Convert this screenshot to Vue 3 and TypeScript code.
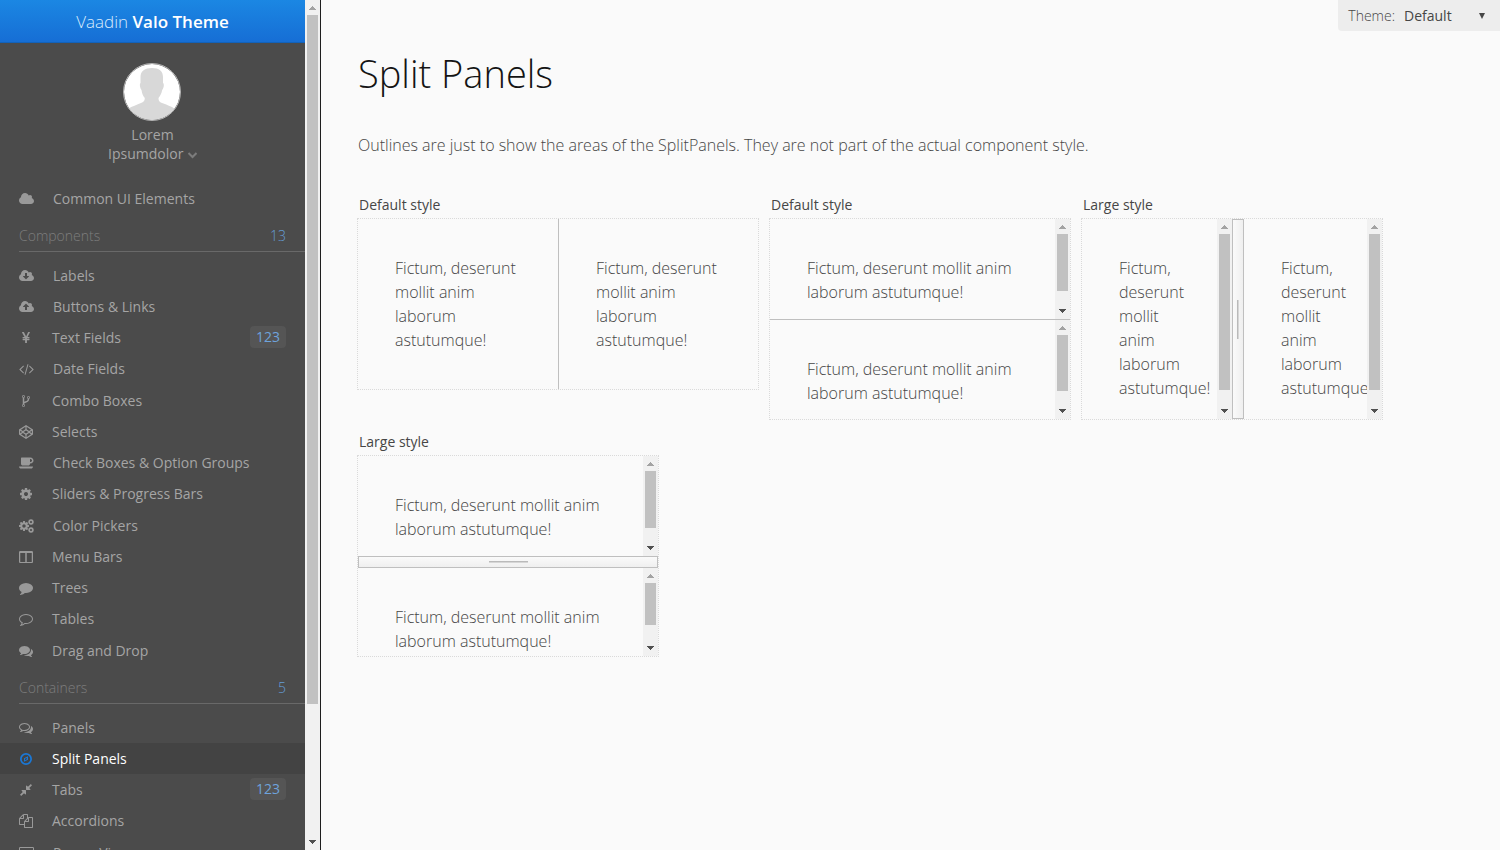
<script setup lang="ts">
import { defineComponent, h, ref } from 'vue'

interface MenuItem {
  label: string
  icon: string
  badge?: string
}

interface MenuSection {
  title: string
  count: number
  items: MenuItem[]
}

interface Glyph {
  width: number
  d: string
}

interface Pane {
  thumb?: number
}

interface Split {
  id: string
  caption: string
  direction: 'horizontal' | 'vertical'
  large: boolean
  panes: [Pane, Pane]
  size: 'wide' | 'regular'
}

const cloud =
  'M1920 1152q0 159-112.5 271.5t-271.5 112.5h-1088q-185 0-316.5-131.5t-131.5-316.5q0-132 71-241.5t187-163.5q-2-28-2-43 0-212 150-362t362-150q158 0 286.5 88t187.5 230q70-62 166-62 106 0 181 75t75 181q0 75-41 138 129 30 213 134.5t84 239.5z'

const glyphs: Record<string, Glyph> = {
  cloud: { width: 15, d: cloud },
  download: {
    width: 15,
    d: cloud + 'M1280 928q0-14-9-23t-23-9h-224v-352q0-13-9.5-22.5t-22.5-9.5h-192q-13 0-22.5 9.5t-9.5 22.5v352h-224q-13 0-22.5 9.5t-9.5 22.5q0 14 9 23l352 352q9 9 23 9t23-9l351-351q10-12 10-24z',
  },
  upload: {
    width: 15,
    d: cloud + 'M1280 864q0-14-9-23l-352-352q-9-9-23-9t-23 9l-351 351q-10 12-10 24 0 14 9 23t23 9h224v352q0 13 9.5 22.5t22.5 9.5h192q13 0 22.5-9.5t9.5-22.5v-352h224q13 0 22.5-9.5t9.5-22.5z',
  },
  yen: {
    width: 14,
    d: 'M985.500 1536h-172q-13 0-22.500-9t-9.500-23v-330h-288q-13 0-22.500-9t-9.500-23v-103q0-13 9.500-22.500t22.500-9.500h288v-85h-288q-13 0-22.500-9t-9.500-23v-104q0-13 9.500-22.500t22.500-9.500h214l-321-578q-8-16 0-32 10-16 28-16h194q19 0 29 18l215 425q19 38 56 125 10-24 30.500-68t27.500-61l191-420q8-19 29-19h191q17 0 27 16 9 14 1 31l-313 579h215q13 0 22.500 9.500t9.500 22.500v104q0 14-9.500 23t-22.500 9h-290v85h290q13 0 22.500 9.500t9.500 22.500v103q0 14-9.500 23t-22.500 9h-290v330q0 13-9.500 22.500t-22.500 9.500z',
  },
  code: {
    width: 15,
    d: 'M617 1399l-50 50q-10 10-23 10t-23-10l-466-466q-10-10-10-23t10-23l466-466q10-10 23-10t23 10l50 50q10 10 10 23t-10 23l-393 393 393 393q10 10 10 23t-10 23zm591-1067l-373 1291q-4 13-15.5 19.5t-23.5 2.5l-62-17q-13-4-19.5-15.5t-2.500-24.500l373-1291q4-13 15.500-19.500t23.500-2.500l62 17q13 4 19.500 15.500t2.500 24.500zm657 651l-466 466q-10 10-23 10t-23-10l-50-50q-10-10-10-23t10-23l393-393-393-393q-10-10-10-23t10-23l50-50q10-10 23-10t23 10l466 466q10 10 10 23t-10 23z',
  },
  fork: {
    width: 14,
    d: 'M672 1472q0-40-28-68t-68-28-68 28-28 68 28 68 68 28 68-28 28-68zm0-1152q0-40-28-68t-68-28-68 28-28 68 28 68 68 28 68-28 28-68zm640 128q0-40-28-68t-68-28-68 28-28 68 28 68 68 28 68-28 28-68zm96 0q0 52-26 96.500t-70 69.500q-2 287-226 414-67 38-203 81-128 40-169.500 71t-41.500 100v26q44 25 70 69.500t26 96.500q0 80-56 136t-136 56-136-56-56-136q0-52 26-96.500t70-69.500v-820q-44-25-70-69.500t-26-96.500q0-80 56-136t136-56 136 56 56 136q0 52-26 96.500t-70 69.500v497q54-26 154-57 55-17 87.500-29.500t70.500-31 59-39.500 40.500-51 28-69.500 8.500-91.500q-44-25-70-69.500t-26-96.500q0-80 56-136t136-56 136 56 56 136z',
  },
  codepen: {
    width: 14,
    d: 'M896 0L1792 570V1222L896 1792L0 1222V570ZM820 230L250 600L500 770L820 555ZM972 230V555L1292 770L1542 600ZM896 690L590 896L896 1102L1202 896ZM154 740V1052L390 896ZM1638 740L1402 896L1638 1052ZM500 1022L250 1192L820 1562V1237ZM1292 1022L972 1237V1562L1542 1192Z',
  },
  coffee: {
    width: 15,
    d: 'M1664 576q0-80-56-136t-136-56h-64v384h64q80 0 136-56t56-136zm-1664 768h1792q0 106-75 181t-181 75h-1280q-106 0-181-75t-75-181zm1856-768q0 159-112.500 271.500t-271.500 112.500h-64v32q0 92-66 158t-158 66h-704q-92 0-158-66t-66-158v-736q0-26 19-45t45-19h1152q159 0 271.500 112.500t112.500 271.500z',
  },
  cog: {
    width: 14,
    d: 'M1152 896q0-106-75-181t-181-75-181 75-75 181 75 181 181 75 181-75 75-181zm512-109v222q0 12-8 23t-20 13l-185 28q-19 54-39 91 35 50 107 138 10 12 10 25t-9 23q-27 37-99 108t-94 71q-12 0-26-9l-138-108q-44 23-91 38-16 136-29 186-7 28-36 28h-222q-14 0-24.500-8.500t-11.500-21.500l-28-184q-49-16-90-37l-141 107q-10 9-25 9-14 0-25-11-126-114-165-168-7-10-7-23 0-12 8-23 15-21 51-66.500t54-70.500q-27-50-41-99l-183-27q-13-2-21-12.500t-8-23.500v-222q0-12 8-23t19-13l186-28q14-46 39-92-40-57-107-138-10-12-10-24 0-10 9-23 26-36 98.500-107.500t94.500-71.500q13 0 26 10l138 107q44-23 91-38 16-136 29-186 7-28 36-28h222q14 0 24.500 8.500t11.500 21.500l28 184q49 16 90 37l142-107q9-9 24-9 13 0 25 10 129 119 165 170 7 8 7 22 0 12-8 23-15 21-51 66.500t-54 70.500q26 50 41 98l183 28q13 2 21 12.500t8 23.500z',
  },
  cogs: { width: 15, d: '' },
  columns: {
    width: 14,
    d: 'M192 1536h608v-1152h-640v1120q0 13 9.500 22.500t22.500 9.500zM1632 1504v-1120h-640v1152h608q13 0 22.500-9.500t9.500-22.500zM1792 288v1216q0 66-47 113t-113 47h-1472q-66 0-113-47t-47-113v-1216q0-66 47-113t113-47h1472q66 0 113 47t47 113z',
  },
  comment: {
    width: 14,
    d: 'M1792 896q0 174-120 321.500t-326 233-450 85.500q-70 0-145-8-198 175-460 242-49 14-114 22-17 2-30.500-9t-17.500-29v-1q-3-4-.5-12t2-10 4.500-9.500l6-9 7-8.500 8-9q7-8 31-34.500t34.500-38 31-39.500 32.500-51 27-59 26-76q-157-89-247.500-220t-90.500-281q0-130 71-248.500t191-204.500 286-136.500 348-50.500 348 50.500 286 136.500 191 204.500 71 248.500z',
  },
  commentOutline: {
    width: 14,
    d: 'M896 384q-204 0-381.500 69.500t-282 187.500-104.500 255q0 112 71.500 213.500t201.500 175.500l87 50-27 96q-24 91-70 172 152-63 275-171l43-38 57 6q69 8 130 8 204 0 381.500-69.500t282-187.500 104.500-255-104.500-255-282-187.500-381.500-69.500zm896 512q0 174-120 321.500t-326 233-450 85.500q-70 0-145-8-198 175-460 242-49 14-114 22h-5q-15 0-27-10.500t-16-27.500v-1q-3-4-.5-12t2-10 4.500-9.500l6-9 7-8.500 8-9q7-8 31-34.500t34.500-38 31-39.500 32.500-51 27-59 26-76q-157-89-247.500-220t-90.500-281q0-174 120-321.500t326-233 450-85.500 450 85.500 326 233 120 321.500z',
  },
  comments: {
    width: 14,
    d: 'M1408 768q0 139-94 257t-256.500 186.500-353.500 68.500q-86 0-176-16-124 88-278 128-36 9-86 16h-3q-11 0-20.500-8t-11.500-21q-1-3-1-6.500t.5-6.500 2-6l2.500-5 3.500-5.500 4-5 4.500-5 4-4.500q5-6 23-25t26-29.500 22.500-29 25-38.500 20.500-44q-124-72-195-177t-71-224q0-139 94-257t256.500-186.500 353.500-68.500 353.500 68.500 256.500 186.500 94 257zm384 256q0 120-71 224.500t-195 176.500q10 24 20.500 44t25 38.500 22.500 29 26 29.500 23 25q1 1 4 4.500t4.500 5 4 5 3.500 5.500l2.500 5 2 6 .5 6.500-1 6.500q-3 14-13 22t-22 7q-50-7-86-16-154-40-278-128-90 16-176 16-271 0-472-132 58 4 88 4 161 0 309-45t264-129q125-92 192-212t67-254q0-77-23-152 129 71 204 178t75 230z',
  },
  commentsOutline: {
    width: 14,
    d: 'M704 384q-153 0-286 52t-211.500 141-78.500 191q0 82 53 158t149 132l97 56-35 84q34-20 62-39l44-31 53 10q78 14 153 14 153 0 286-52t211.500-141 78.500-191-78.500-191-211.500-141-286-52zm0-128q191 0 353.500 68.500t256.500 186.500 94 257-94 257-256.500 186.500-353.500 68.500q-86 0-176-16-124 88-278 128-36 9-86 16h-3q-11 0-20.500-8t-11.500-21q-1-3-1-6.500t.5-6.500 2-6l2.500-5 3.500-5.500 4-5 4.500-5 4-4.500q5-6 23-25t26-29.500 22.500-29 25-38.500 20.500-44q-124-72-195-177t-71-224q0-139 94-257t256.500-186.500 353.500-68.500zm822 1169q10 24 20.500 44t25 38.500 22.500 29 26 29.500 23 25q1 1 4 4.500t4.500 5 4 5 3.500 5.500l2.500 5 2 6 .5 6.500-1 6.500q-3 14-13 22t-22 7q-50-7-86-16-154-40-278-128-90 16-176 16-271 0-472-132 58 4 88 4 161 0 309-45t264-129q125-92 192-212t67-254q0-77-23-152 129 71 204 178t75 230q0 120-71 224.500t-195 176.500z',
  },
  compass: {
    width: 14,
    d: 'M896 128A768 768 0 1 1 896 1664A768 768 0 1 1 896 128ZM896 352A544 544 0 1 0 896 1440A544 544 0 1 0 896 352ZM640 790L1152 534V1002L640 1258ZM768 870V1052L1000 936V754Z',
  },
  compress: {
    width: 14,
    d: 'M896 960v448q0 26-19 45t-45 19-45-19l-144-144-332 332q-10 10-23 10t-23-10l-114-114q-10-10-10-23t10-23l332-332-144-144q-19-19-19-45t19-45 45-19h448q26 0 45 19t19 45zm755-672q0 13-10 23l-332 332 144 144q19 19 19 45t-19 45-45 19h-448q-26 0-45-19t-19-45v-448q0-26 19-45t45-19 45 19l144 144 332-332q10-10 23-10t23 10l114 114q10 10 10 23z',
  },
  copy: {
    width: 14,
    d: 'M1696 384q40 0 68 28t28 68v1216q0 40-28 68t-68 28h-960q-40 0-68-28t-28-68v-288h-544q-40 0-68-28t-28-68v-672q0-40 20-88t48-76l408-408q28-28 76-48t88-20h416q40 0 68 28t28 68v328q68-40 128-40h416zm-544 213l-299 299h299v-299zm-640-384l-299 299h299v-299zm196 647l316-316v-416h-384v416q0 40-28 68t-68 28h-416v640h512v-256q0-40 20-88t48-76zm956 804v-1152h-384v416q0 40-28 68t-68 28h-416v640h896z',
  },
  card: {
    width: 15,
    d: 'M1760 128q66 0 113 47t47 113v1216q0 66-47 113t-113 47h-1600q-66 0-113-47t-47-113v-1216q0-66 47-113t113-47zM128 256v256h1664v-256zM128 896v640h1664v-640z',
  },
}

const topItem: MenuItem = { label: 'Common UI Elements', icon: 'cloud' }

const sections: MenuSection[] = [
  {
    title: 'Components',
    count: 13,
    items: [
      { label: 'Labels', icon: 'download' },
      { label: 'Buttons & Links', icon: 'upload' },
      { label: 'Text Fields', icon: 'yen', badge: '123' },
      { label: 'Date Fields', icon: 'code' },
      { label: 'Combo Boxes', icon: 'fork' },
      { label: 'Selects', icon: 'codepen' },
      { label: 'Check Boxes & Option Groups', icon: 'coffee' },
      { label: 'Sliders & Progress Bars', icon: 'cog' },
      { label: 'Color Pickers', icon: 'cogs' },
      { label: 'Menu Bars', icon: 'columns' },
      { label: 'Trees', icon: 'comment' },
      { label: 'Tables', icon: 'commentOutline' },
      { label: 'Drag and Drop', icon: 'comments' },
    ],
  },
  {
    title: 'Containers',
    count: 5,
    items: [
      { label: 'Panels', icon: 'commentsOutline' },
      { label: 'Split Panels', icon: 'compass' },
      { label: 'Tabs', icon: 'compress', badge: '123' },
      { label: 'Accordions', icon: 'copy' },
      { label: 'Popup Views', icon: 'card' },
    ],
  },
]

const text = 'Fictum, deserunt mollit anim laborum astutumque!'

const splits: Split[] = [
  { id: 'h', caption: 'Default style', direction: 'horizontal', large: false, size: 'wide', panes: [{}, {}] },
  { id: 'v', caption: 'Default style', direction: 'vertical', large: false, size: 'regular', panes: [{ thumb: 82 }, { thumb: 81 }] },
  { id: 'hl', caption: 'Large style', direction: 'horizontal', large: true, size: 'regular', panes: [{ thumb: 92 }, { thumb: 92 }] },
  { id: 'vl', caption: 'Large style', direction: 'vertical', large: true, size: 'regular', panes: [{ thumb: 82 }, { thumb: 72 }] },
]

const active = ref('Split Panels')
const theme = ref('Default')

const Icon = defineComponent({
  props: { name: { type: String, required: true } },
  setup(props) {
    return () => {
      const glyph = glyphs[props.name]
      const children =
        props.name === 'cogs'
          ? [
              h('path', { d: glyphs.cog.d, transform: 'translate(-107 149) scale(0.833)' }),
              h('path', { d: glyphs.cog.d, transform: 'translate(1088 -64) scale(0.5)' }),
              h('path', { d: glyphs.cog.d, transform: 'translate(1088 960) scale(0.5)' }),
            ]
          : [h('path', { d: glyph.d })]
      return h(
        'svg',
        { width: glyph.width, height: 14, viewBox: `0 0 ${glyph.width * 128} 1792`, fill: 'currentColor', 'fill-rule': 'evenodd', 'aria-hidden': 'true' },
        children,
      )
    }
  },
})

const ScrollBar = defineComponent({
  props: { thumb: { type: Number, required: true } },
  setup(props) {
    const arrow = (kind: string, d: string) =>
      h('svg', { class: ['arrow', kind], width: 15, height: 15, viewBox: '0 0 15 15', 'shape-rendering': 'crispEdges' }, [h('path', { d })])
    return () =>
      h('div', { class: 'scrollbar', 'aria-hidden': 'true' }, [
        arrow('up', 'M7 6h1v1h1v1h1v1h1v1H4V9h1V8h1V7h1z'),
        h('div', { class: 'track' }, [h('div', { class: 'thumb', style: { height: `${props.thumb}%` } })]),
        arrow('down', 'M4 5h7v1h-1v1H9v1H8v1H7V8H6V7H5V6H4z'),
      ])
  },
})
</script>

<template>
  <div class="page">
    <aside class="sidebar">
      <div class="menu">
        <header class="brand">Vaadin <strong>Valo Theme</strong></header>

        <div class="user">
          <svg class="avatar" width="59" height="58" viewBox="0 0 59 58" role="img" aria-label="User">
            <defs>
              <clipPath id="face"><circle cx="29" cy="29" r="28" /></clipPath>
            </defs>
            <circle cx="29" cy="29" r="28" fill="#fff" />
            <path
              clip-path="url(#face)"
              fill="#d8d8d8"
              d="M29 5c7 0 11 3 11 9v6c1.500 1 .8 5-.8 7-.8 4-2.200 6-3.700 8 0 3 1 4 3.500 5 5 2 9 3 13 6v14H5V46c4-3 9-4 13-6 2.500-1 3.800-2 3.800-5-1.700-2-2.700-4-3.300-8-1.600-2-2.200-6-1-7v-6c0-6 4.500-9 11.500-9z"
            />
            <circle cx="29" cy="29" r="28.500" fill="none" stroke="#b4b4b4" />
          </svg>
          <button type="button" class="user-name">
            Lorem<br />Ipsumdolor
            <svg width="10" height="9" viewBox="0 0 10 9" fill="none" stroke="currentColor" stroke-width="2" aria-hidden="true">
              <path d="M1.500 3L5.500 7 9.500 3" />
            </svg>
          </button>
        </div>

        <nav>
          <ul class="items">
            <li>
              <a href="#" class="item"><Icon :name="topItem.icon" /><span>{{ topItem.label }}</span></a>
            </li>
          </ul>
          <template v-for="section in sections" :key="section.title">
            <h2 class="section">
              <span>{{ section.title }}</span><span class="count">{{ section.count }}</span>
            </h2>
            <ul class="items">
              <li v-for="item in section.items" :key="item.label">
                <a href="#" class="item" :class="{ active: item.label === active }" @click.prevent="active = item.label">
                  <Icon :name="item.icon" />
                  <span>{{ item.label }}</span>
                  <span v-if="item.badge" class="badge">{{ item.badge }}</span>
                </a>
              </li>
            </ul>
          </template>
        </nav>
      </div>
      <ScrollBar :thumb="84" />
    </aside>

    <main class="content">
      <div class="theme">
        <label for="theme">Theme:</label>
        <select id="theme" v-model="theme">
          <option>Default</option>
        </select>
        <svg class="caret" width="6" height="6" viewBox="0 0 6 6" aria-hidden="true"><path d="M0 0h6L3 6z" fill="#464646" /></svg>
      </div>

      <h1>Split Panels</h1>
      <p class="intro">Outlines are just to show the areas of the SplitPanels. They are not part of the actual component style.</p>

      <div class="splits">
        <section v-for="split in splits" :key="split.id" :class="split.size">
          <h3>{{ split.caption }}</h3>
          <div class="split" :class="[split.direction, { large: split.large }]">
            <div class="pane first">
              <div class="view"><p>{{ text }}</p></div>
              <ScrollBar v-if="split.panes[0].thumb" :thumb="split.panes[0].thumb" />
            </div>
            <div class="splitter"><i v-if="split.large"></i></div>
            <div class="pane">
              <div class="view"><p>{{ text }}</p></div>
              <ScrollBar v-if="split.panes[1].thumb" :thumb="split.panes[1].thumb" />
            </div>
          </div>
        </section>
      </div>
    </main>
  </div>
</template>

<style>
body {
  margin: 0;
}

.scrollbar {
  display: flex;
  flex-direction: column;
  flex: none;
  width: 15px;
  background: #f1f1f1;
}

.scrollbar .arrow {
  flex: none;
  fill: #505050;
}

.scrollbar .arrow.up {
  fill: #a3a3a3;
}

.scrollbar .track {
  flex: 1;
  padding: 0 2px;
}

.scrollbar .thumb {
  background: #c1c1c1;
}
</style>

<style scoped>
.page {
  display: flex;
  height: 100vh;
  overflow: hidden;
  background: #fafafa;
  color: #464646;
  font: 300 16px/24px "Open Sans", sans-serif;
}

h1,
h2,
h3,
p,
ul {
  margin: 0;
  padding: 0;
  font-weight: inherit;
}

.sidebar {
  display: flex;
  flex: none;
  width: 320px;
  border-right: 1px solid #1e1e1e;
}

.menu {
  flex: 1;
  overflow: hidden;
  background: #4b4b4b;
  color: #a5a5a5;
  font-size: 14px;
}

.brand {
  box-sizing: border-box;
  height: 43px;
  border-bottom: 1px solid #1362b9;
  background: linear-gradient(#1b87e3, #166ed5);
  color: #d9ebfb;
  font-size: 17px;
  line-height: 43px;
  text-align: center;
}

.brand strong {
  color: #fff;
  font-weight: 600;
}

.user {
  display: flex;
  flex-direction: column;
  align-items: center;
  padding: 20px 0;
}

.user-name {
  margin-top: 4px;
  padding: 0;
  border: 0;
  background: none;
  color: inherit;
  font: 400 14px/19px "Open Sans", sans-serif;
}

.user-name svg {
  color: #7c7c7c;
}

.items {
  list-style: none;
}

.items li:nth-child(4n) {
  margin-bottom: 1px;
}

.item {
  display: flex;
  align-items: center;
  padding: 0 19px;
  color: inherit;
  font-weight: 400;
  line-height: 31px;
  text-decoration: none;
}

.item svg {
  flex: none;
  margin-right: 19px;
  color: #999;
}

.item.active {
  background: #434343;
  color: #fff;
}

.item.active svg {
  color: #1b78d6;
}

.badge {
  margin: 0 0 2px auto;
  padding: 0 6px;
  border-radius: 4px;
  background: #555;
  color: #6ea3dc;
  line-height: 22px;
}

.section {
  display: flex;
  justify-content: space-between;
  margin: 10px 0 8px 19px;
  padding: 0 19px 3px 0;
  border-bottom: 1px solid #696969;
  color: #7d7d7d;
  font-size: 14px;
  line-height: 24px;
}

.count {
  color: #659dd6;
}

.content {
  position: relative;
  flex: 1;
  padding: 52px 37px;
}

.theme {
  position: absolute;
  top: 0;
  right: 0;
  display: flex;
  align-items: center;
  padding: 0 15px 0 10px;
  border-radius: 0 0 0 4px;
  background: #ededed;
  font-size: 14px;
  line-height: 31px;
}

.theme select {
  width: 75px;
  margin-left: 9px;
  padding: 0;
  border: 0;
  appearance: none;
  background: none;
  color: #464646;
  font: 400 14px/31px "Open Sans", sans-serif;
}

h1 {
  color: #141414;
  font-size: 38px;
  line-height: 43px;
}

.intro {
  margin: 38px 0 37px;
}

.splits {
  display: flex;
  flex-wrap: wrap;
  align-items: flex-start;
  gap: 12px;
}

h3 {
  padding: 0 1px 4px;
  font-size: 14px;
  font-weight: 400;
  line-height: 21px;
}

.wide {
  width: 400px;
}

.regular {
  width: 300px;
}

.split {
  display: flex;
  height: 200px;
  outline: 1px dotted #dadada;
}

.wide .split {
  height: 170px;
}

.vertical {
  flex-direction: column;
}

.pane {
  display: flex;
  flex: 1;
  min-width: 0;
  min-height: 0;
}

.pane.first {
  flex: none;
}

.horizontal .first {
  width: 50%;
}

.vertical .first {
  height: 50%;
}

.view {
  flex: 1;
  min-width: 0;
  overflow: hidden;
}

.view p {
  padding: 37px;
}

.splitter {
  display: flex;
  flex: none;
  align-items: center;
  justify-content: center;
  background: #bfbfbf;
}

.horizontal .splitter {
  width: 1px;
}

.vertical .splitter {
  height: 1px;
}

.large .splitter {
  box-sizing: border-box;
  border: 1px solid #bfbfbf;
}

.large.horizontal .splitter {
  width: 12px;
  background: linear-gradient(to right, #fafafa, #efefef);
}

.large.vertical .splitter {
  height: 12px;
  background: linear-gradient(#fafafa, #efefef);
}

.splitter i {
  width: 2px;
  height: 39px;
  background: linear-gradient(to right, #bababa 50%, #d6d6d6 50%);
}

.vertical .splitter i {
  width: 39px;
  height: 2px;
  background: linear-gradient(#bababa 50%, #d6d6d6 50%);
}
</style>
